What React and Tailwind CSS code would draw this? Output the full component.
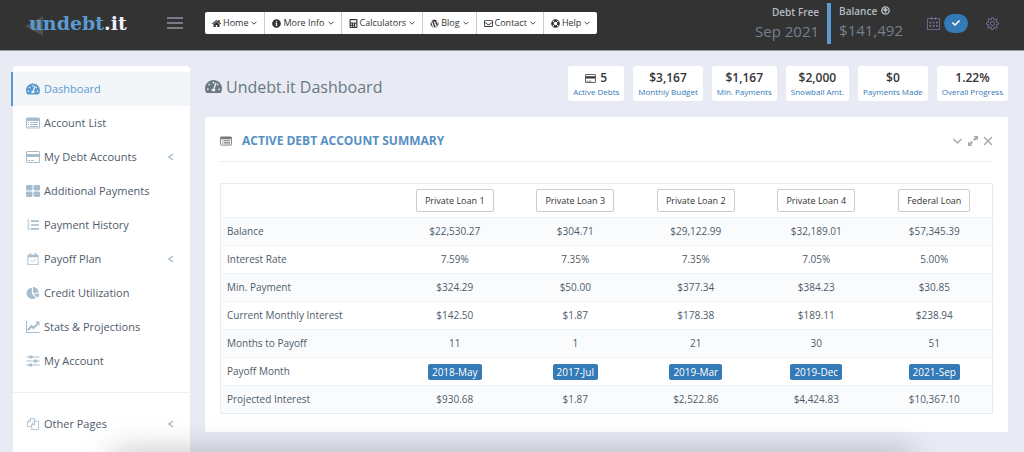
import React from "react";
import {
  FaHome,
  FaInfoCircle,
  FaCalculator,
  FaWordpress,
  FaRegEnvelope,
  FaLifeRing,
  FaCheck,
  FaChartPie,
  FaTachometerAlt,
} from "react-icons/fa";
import { SlCalender, SlSettings } from "react-icons/sl";

const ListIcon = ({ className }) => (
  <svg viewBox="0 0 28 24" className={className} fill="currentColor">
    <path
      fillRule="evenodd"
      d="M3 1h22a3 3 0 0 1 3 3v16a3 3 0 0 1-3 3H3a3 3 0 0 1-3-3V4a3 3 0 0 1 3-3zM2 8v12a1 1 0 0 0 1 1h22a1 1 0 0 0 1-1V8z"
    />
    <path d="M4 10h2v2H4zM4 14h2v2H4zM4 18h2v2H4zM8 10h16v2H8zM8 14h16v2H8zM8 18h16v2H8z" />
  </svg>
);

const CardIcon = ({ className }) => (
  <svg viewBox="0 0 28 24" className={className} fill="currentColor">
    <path
      fillRule="evenodd"
      d="M3 0h22a3 3 0 0 1 3 3v18a3 3 0 0 1-3 3H3a3 3 0 0 1-3-3V3a3 3 0 0 1 3-3zM3 2a1 1 0 0 0-1 1v3h24V3a1 1 0 0 0-1-1zM2 12v9a1 1 0 0 0 1 1h22a1 1 0 0 0 1-1v-9z"
    />
    <path d="M4 18h4v2H4zM10 18h6v2h-6z" />
  </svg>
);

const BlocksIcon = ({ className }) => (
  <svg viewBox="0 0 26 22" className={className} fill="currentColor">
    <rect x="0" y="0" width="12" height="10" rx="2" />
    <rect x="14" y="0" width="12" height="10" rx="2" />
    <rect x="0" y="12" width="12" height="10" rx="2" />
    <rect x="14" y="12" width="12" height="10" rx="2" />
  </svg>
);

const NumberedIcon = ({ className }) => (
  <svg viewBox="0 0 28 28" className={className} fill="currentColor">
    <path d="M9 3h19v4H9zM9 12h19v4H9zM9 21h19v4H9z" />
    <path
      d="M1 2l2-1v6M1 7h4M1 11h3v2l-3 3h4M1 20h4l-2 2c3 0 3 4-2 4"
      fill="none"
      stroke="currentColor"
      strokeWidth="2"
    />
  </svg>
);

const CalendarCheckIcon = ({ className }) => (
  <svg viewBox="0 0 26 28" className={className} fill="currentColor">
    <path
      fillRule="evenodd"
      d="M2 4h3V2a2 2 0 0 1 4 0v2h8V2a2 2 0 0 1 4 0v2h3a2 2 0 0 1 2 2v20a2 2 0 0 1-2 2H2a2 2 0 0 1-2-2V6a2 2 0 0 1 2-2zM2 10v16h22V10z"
    />
    <path d="M8 17l4 4 7-7" fill="none" stroke="currentColor" strokeWidth="2" />
  </svg>
);

const LineChartIcon = ({ className }) => (
  <svg viewBox="0 0 28 24" className={className} fill="currentColor">
    <path d="M0 0h2v22h26v2H0z" />
    <path d="M4 18l7-8 4 4 8-8" fill="none" stroke="currentColor" strokeWidth="4" />
    <path d="M18 1h9v9z" />
  </svg>
);

const SlidersIcon = ({ className }) => (
  <svg viewBox="0 0 26 24" className={className} fill="currentColor">
    <path d="M0 3h26v2H0zM0 11h26v2H0zM0 19h26v2H0z" />
    <rect x="6" y="1" width="6" height="6" rx="1" />
    <rect x="15" y="9" width="6" height="6" rx="1" />
    <rect x="5" y="17" width="6" height="6" rx="1" />
  </svg>
);

const CopyIcon = ({ className }) => (
  <svg
    viewBox="0 0 28 28"
    className={className}
    fill="none"
    stroke="currentColor"
    strokeWidth="2"
    strokeLinejoin="round"
  >
    <path d="M11 20H1V9l7-8h9v6M8 1v8H1" />
    <path d="M18 7h9v20H11V15zM18 7v8h-7" />
  </svg>
);

const ChevronIcon = ({ className }) => (
  <svg viewBox="0 0 10 6" className={className} fill="none" stroke="currentColor" strokeWidth="1.5">
    <path d="M1 1l4 4 4-4" />
  </svg>
);

const AngleLeftIcon = ({ className }) => (
  <svg viewBox="0 0 6 8" className={className} fill="none" stroke="currentColor" strokeWidth="1.5">
    <path d="M5 1L1 4l4 3" />
  </svg>
);

const topLinks = [
  { label: "Home", icon: FaHome },
  { label: "More Info", icon: FaInfoCircle },
  { label: "Calculators", icon: FaCalculator },
  { label: "Blog", icon: FaWordpress },
  { label: "Contact", icon: FaRegEnvelope },
  { label: "Help", icon: FaLifeRing },
];

const menu = [
  { label: "Dashboard", icon: FaTachometerAlt, active: true },
  { label: "Account List", icon: ListIcon },
  { label: "My Debt Accounts", icon: CardIcon, sub: true },
  { label: "Additional Payments", icon: BlocksIcon },
  { label: "Payment History", icon: NumberedIcon },
  { label: "Payoff Plan", icon: CalendarCheckIcon, sub: true },
  { label: "Credit Utilization", icon: FaChartPie },
  { label: "Stats & Projections", icon: LineChartIcon },
  { label: "My Account", icon: SlidersIcon },
];

const stats = [
  { value: "5", label: "Active Debts", icon: CardIcon },
  { value: "$3,167", label: "Monthly Budget" },
  { value: "$1,167", label: "Min. Payments" },
  { value: "$2,000", label: "Snowball Amt." },
  { value: "$0", label: "Payments Made" },
  { value: "1.22%", label: "Overall Progress" },
];

const loans = ["Private Loan 1", "Private Loan 3", "Private Loan 2", "Private Loan 4", "Federal Loan"];

const rows = [
  { label: "Balance", values: ["$22,530.27", "$304.71", "$29,122.99", "$32,189.01", "$57,345.39"] },
  { label: "Interest Rate", values: ["7.59%", "7.35%", "7.35%", "7.05%", "5.00%"] },
  { label: "Min. Payment", values: ["$324.29", "$50.00", "$377.34", "$384.23", "$30.85"] },
  { label: "Current Monthly Interest", values: ["$142.50", "$1.87", "$178.38", "$189.11", "$238.94"] },
  { label: "Months to Payoff", values: ["11", "1", "21", "30", "51"] },
  { label: "Payoff Month", badge: true, values: ["2018-May", "2017-Jul", "2019-Mar", "2019-Dec", "2021-Sep"] },
  { label: "Projected Interest", values: ["$930.68", "$1.87", "$2,522.86", "$4,424.83", "$10,367.10"] },
];

const MenuItem = ({ item }) => {
  const Icon = item.icon;
  return (
    <li>
      <a
        href="#"
        className={
          item.active
            ? "-ml-0.5 flex h-[34px] items-center border-l-2 border-[#5b9bd1] bg-[#f2f6f9] pl-[13px] pr-4 text-[#5b9bd1]"
            : "flex h-[34px] items-center pl-[13px] pr-4 text-[#4f5b69]"
        }
      >
        <Icon className={item.active ? "h-[14px] w-[14px]" : "h-3 w-[14px] text-[#a7bdcd]"} />
        <span className="ml-1">{item.label}</span>
        {item.sub && <AngleLeftIcon className="ml-auto h-2 w-[6px] text-[#a7bdcd]" />}
      </a>
    </li>
  );
};

const Header = () => (
  <header className="flex h-[51px] items-center border-b border-[#9a9da3] bg-[#333333] pr-[25px]">
    <a
      href="#"
      className="-mt-1 ml-[29px] w-[138px] font-['DejaVu_Serif',serif] text-[19px] font-bold leading-6 text-[#f0f2fa]"
    >
      <span className="relative">
        <svg viewBox="0 0 18 20" className="absolute -left-1 top-1 h-5 w-[18px] fill-[#505050]">
          <path d="M0 10L18 0v20z" />
        </svg>
        <span className="relative text-[#5b9bd1]">undebt</span>
      </span>
      .it
    </a>
    <button type="button" aria-label="Toggle menu" className="-mt-1 flex w-4 flex-col gap-[3px]">
      <span className="h-0.5 bg-[#777c85]" />
      <span className="h-0.5 bg-[#777c85]" />
      <span className="h-0.5 bg-[#777c85]" />
    </button>

    <nav className="-mt-1 ml-[22px] flex divide-x divide-[#cccccc] rounded-xs bg-white text-[9px] text-[#333333]">
      {topLinks.map(({ label, icon: Icon }) => (
        <button key={label} type="button" className="flex h-[22px] items-center px-[7px] whitespace-nowrap">
          <Icon className="h-[9px] w-[9px]" />
          <span className="ml-[2px]">{label}</span>
          <ChevronIcon className="ml-[3px] h-1 w-[6px]" />
        </button>
      ))}
    </nav>

    <div className="-mt-1 ml-auto flex items-center whitespace-nowrap">
      <div className="pr-2 text-right">
        <div className="text-[10px] leading-4 font-semibold text-[#b4bcc3]">Debt Free</div>
        <div className="text-[15px] leading-[22px] text-[#76818f]">Sep 2021</div>
      </div>
      <div className="h-[41px] border-l-4 border-[#5b9bd1] pl-2">
        <div className="flex items-center text-[10px] leading-4 font-semibold text-[#b4bcc3]">
          Balance
          <svg viewBox="0 0 16 16" className="ml-1 h-[9px] w-[9px]" fill="none" stroke="currentColor" strokeWidth="2.5">
            <circle cx="8" cy="8" r="6.500" />
            <path d="M8 12V5M4.500 8L8 4.500 11.500 8" />
          </svg>
        </div>
        <div className="text-[15px] leading-[22px] text-[#76818f]">$141,492</div>
      </div>
      <button type="button" aria-label="Calendar" className="ml-6 text-[#7678ab]">
        <SlCalender className="h-[13px] w-[13px]" />
      </button>
      <button
        type="button"
        aria-label="Done"
        className="ml-1 flex h-[19px] w-6 items-center justify-center rounded-full bg-[#337ab7] text-white"
      >
        <FaCheck className="h-2 w-2" />
      </button>
      <button type="button" aria-label="Settings" className="ml-[18px] text-[#7678ab]">
        <SlSettings className="h-[13px] w-[13px]" />
      </button>
    </div>
  </header>
);

const Sidebar = () => (
  <aside className="w-[177px] shrink-0 rounded-t bg-white pt-[6px] text-[11px]">
    <ul>
      {menu.map((item) => (
        <MenuItem key={item.label} item={item} />
      ))}
    </ul>
    <ul className="mt-[14px] border-t border-[#eef0f2] pt-[14px]">
      <MenuItem item={{ label: "Other Pages", icon: CopyIcon, sub: true }} />
    </ul>
  </aside>
);

const SummaryPanel = () => (
  <section className="mt-4 rounded-xs bg-white px-[15px] pb-[18px]">
    <div className="flex h-[45px] items-center border-b border-[#eeeeee] pt-1">
      <ListIcon className="h-[10px] w-3 text-[#777777]" />
      <h2 className="ml-[10px] text-[12px] font-bold text-[#568fc3] uppercase">Active Debt Account Summary</h2>
      <div className="ml-auto flex items-center gap-[5px] text-[#aaaaaa]">
        <button type="button" aria-label="Collapse">
          <ChevronIcon className="h-[6px] w-[11px]" />
        </button>
        <button type="button" aria-label="Expand">
          <svg viewBox="0 0 10 10" className="h-[10px] w-[10px]" fill="currentColor">
            <path d="M5.500 0H10v4.500L8.500 3 6.500 5 5 3.500 7 1.500zM4.500 10H0V5.500L1.500 7l2-2L5 6.500l-2 2z" />
          </svg>
        </button>
        <button type="button" aria-label="Close">
          <svg viewBox="0 0 10 10" className="h-[10px] w-[10px]" stroke="currentColor" strokeWidth="1.5">
            <path d="M1 1l8 8M9 1L1 9" />
          </svg>
        </button>
      </div>
    </div>

    <table className="mt-[21px] w-full table-fixed border border-[#e7ecf1] text-[10px] text-[#4f5b69]">
      <colgroup>
        <col className="w-[174px]" />
        <col />
        <col />
        <col />
        <col />
        <col className="w-[116px]" />
      </colgroup>
      <thead>
        <tr className="h-[34px]">
          <td />
          {loans.map((loan) => (
            <th key={loan} scope="col" className="p-0 font-normal">
              <button
                type="button"
                className="h-[23px] rounded-xs border border-[#cccccc] px-2 text-[9px] whitespace-nowrap text-[#333333]"
              >
                {loan}
              </button>
            </th>
          ))}
        </tr>
      </thead>
      <tbody>
        {rows.map((row) => (
          <tr key={row.label} className="h-7 border-t border-[#f0f3f6] odd:bg-[#fafbfd]">
            <th scope="row" className="p-0 pl-[6px] text-left font-normal">
              {row.label}
            </th>
            {row.values.map((value, i) => (
              <td key={i} className="p-0 text-center">
                {row.badge ? (
                  <span className="inline-block rounded-xs bg-[#337ab7] px-1 leading-4 text-white">{value}</span>
                ) : (
                  value
                )}
              </td>
            ))}
          </tr>
        ))}
      </tbody>
    </table>
  </section>
);

const App = () => {
  return (
    <div className="flex min-h-screen flex-col bg-[#e8ebf4] font-['Open_Sans',sans-serif]">
      <Header />
      <div className="flex flex-1 gap-[15px] pt-[15px] pr-4 pl-[13px]">
        <Sidebar />
        <main className="min-w-0 flex-1 pb-5">
          <div className="flex items-center justify-between">
            <h1 className="flex items-center gap-1 pt-[6px] text-[16px] whitespace-nowrap text-[#697882]">
              <FaTachometerAlt className="h-[17px] w-[17px]" />
              Undebt.it Dashboard
            </h1>
            <div className="flex gap-[9px]">
              {stats.map(({ value, label, icon: Icon }) => (
                <a
                  key={label}
                  href="#"
                  className="rounded-[3px] bg-white px-[5px] pt-1 pb-[3px] text-center whitespace-nowrap"
                >
                  <div className="flex items-center justify-center gap-1 text-[12px] leading-4 font-semibold text-[#333333]">
                    {Icon && <Icon className="h-[9px] w-[11px]" />}
                    {value}
                  </div>
                  <div className="text-[8px] leading-3 text-[#337ab7]">{label}</div>
                </a>
              ))}
            </div>
          </div>
          <SummaryPanel />
        </main>
      </div>
      <div className="pointer-events-none fixed inset-x-28 top-full h-8 shadow-[0_0_32px_rgba(0,0,0,0.25)]" />
    </div>
  );
};

export default App;
